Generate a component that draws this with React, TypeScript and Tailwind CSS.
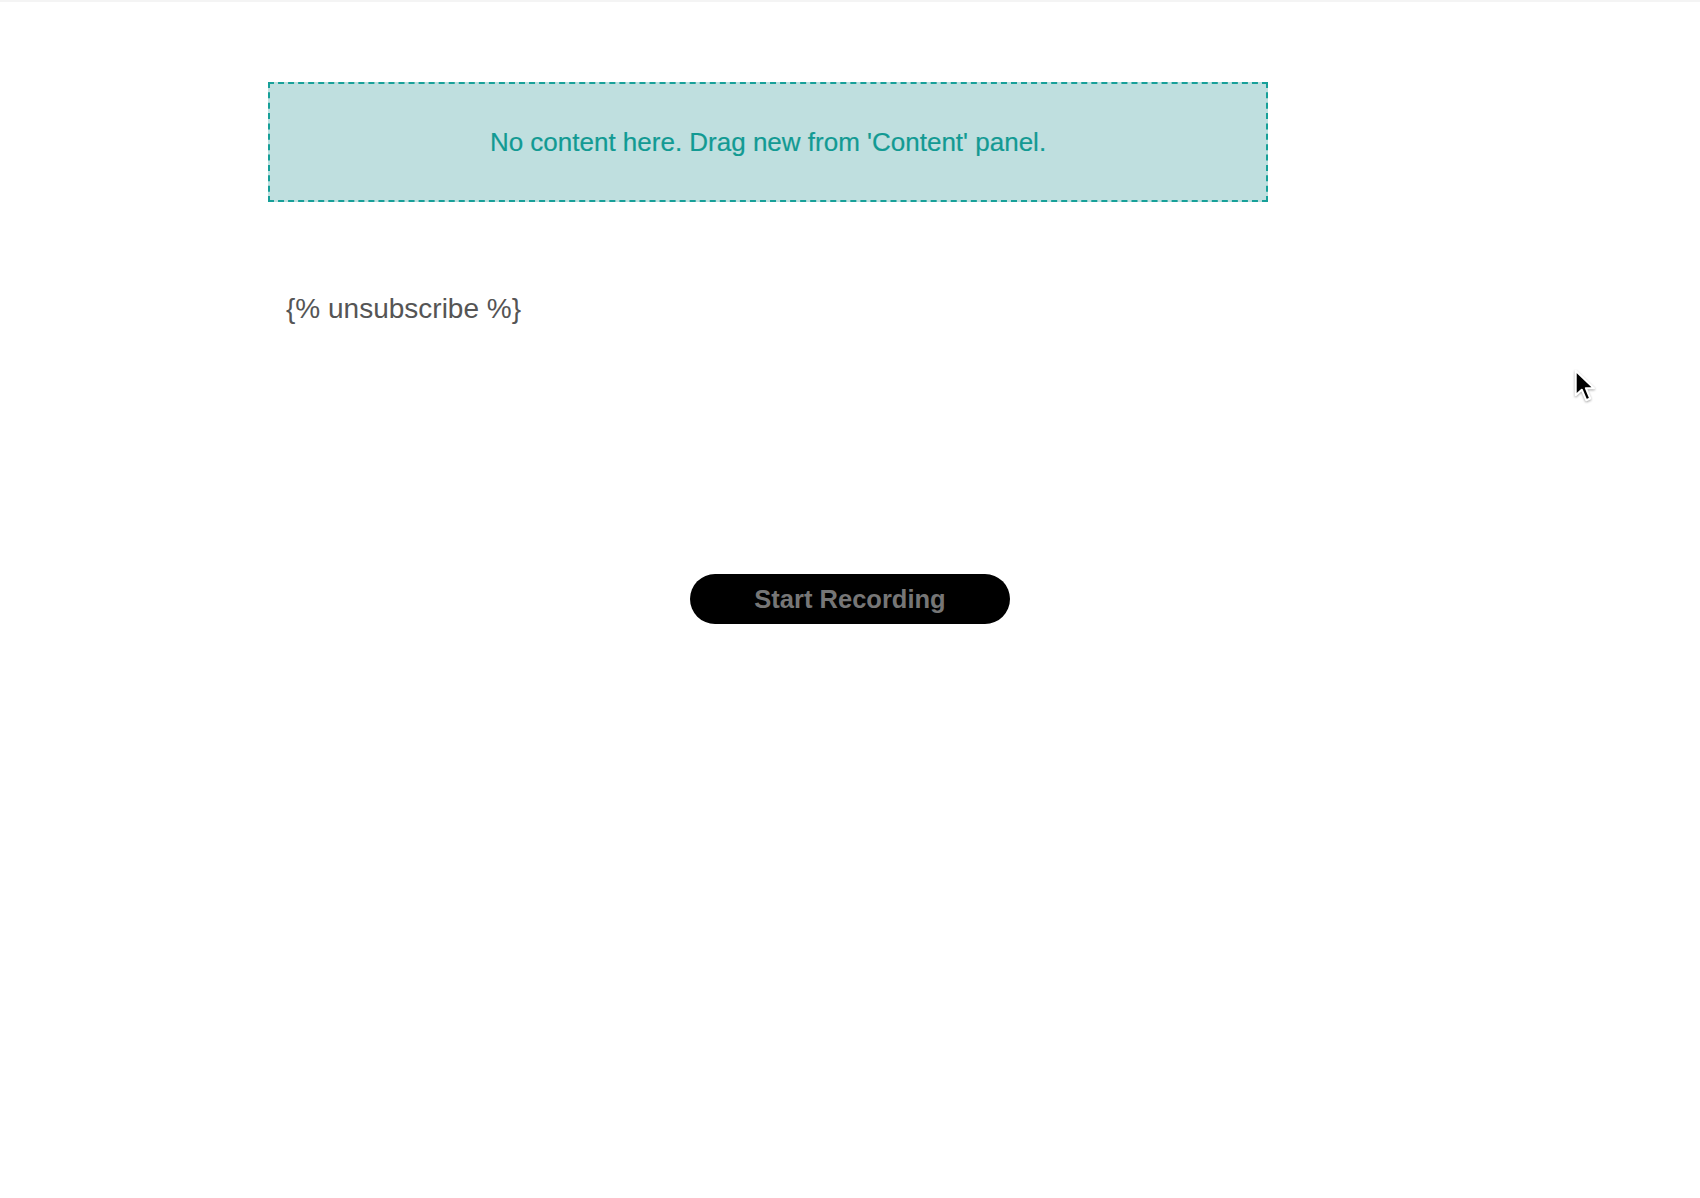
import React from 'react';

// Mouse pointer captured in the screenshot
function Pointer() {
  return (
    <svg
      className="absolute left-[1574px] top-[367px] drop-shadow-[0_1px_1px_rgba(0,0,0,0.35)]"
      width="22"
      height="34"
      viewBox="0 0 13 20"
      aria-hidden="true"
    >
      <path
        d="M1 1 L1 15.5 L4.6 12.2 L7.2 18.4 L9.6 17.4 L7 11.3 L11.8 11.3 Z"
        fill="#000"
        stroke="#fff"
        strokeWidth="1.2"
        strokeLinejoin="round"
      />
    </svg>
  );
}

export default function App() {
  return (
    <div className="relative min-h-screen w-full bg-white border-t-2 border-[#f4f4f4] font-['Liberation_Sans',Arial,sans-serif]">
      <div className="ml-[268px] w-[1000px] pt-[80px]">
        <div className="flex h-[120px] items-center justify-center border-2 border-dashed border-[#17a099] bg-[#bfdfdf]">
          <p className="text-[26px] leading-none text-[#129a93] [-webkit-text-stroke:0.2px_#129a93]">
            No content here. Drag new from &#39;Content&#39; panel.
          </p>
        </div>

        <div className="pl-[18px] pt-[91px]">
          <p className="text-[28px] leading-[32px] text-[#555555]">{'{% unsubscribe %}'}</p>
        </div>
      </div>

      <div className="flex justify-center pt-[249px]">
        <button
          type="button"
          className="flex h-[50px] w-[320px] items-center justify-center rounded-full bg-black text-[25.5px] font-bold text-[#767676]"
        >
          Start Recording
        </button>
      </div>

      <Pointer />
    </div>
  );
}
